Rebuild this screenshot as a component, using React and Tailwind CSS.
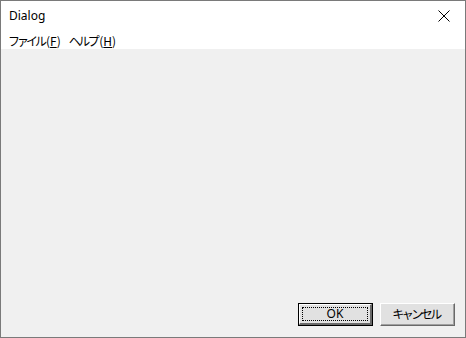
export default function App() {
  const jp = { fontFamily: '"Noto Sans CJK JP", "Noto Sans", sans-serif' };
  return (
    <div className="w-[466px] h-[338px] flex flex-col border border-[#7a7a7a] bg-[#f0f0f0] overflow-hidden" style={{ fontFamily: '"Noto Sans", "Noto Sans CJK JP", sans-serif' }}>
      <div className="h-[29px] bg-white flex items-center justify-between shrink-0">
        <span className="pl-[8px] text-[12px] text-black leading-none">Dialog</span>
        <div className="w-[46px] h-[29px] flex items-center justify-center pl-[4px]">
          <svg width="12" height="12" viewBox="0 0 12 12">
            <path d="M0.5 0.5 L11.5 11.5 M11.5 0.5 L0.5 11.5" stroke="#000" strokeWidth="1" fill="none" />
          </svg>
        </div>
      </div>
      <div className="h-[19px] bg-white flex items-center text-[12px] text-black shrink-0 leading-none pt-[2px]" style={jp}>
        <span className="pl-[7px]"><span className="tracking-[-3px]">ファイル</span><span className="pl-[2px]">(<span className="underline">F</span>)</span></span>
        <span className="pl-[8px]"><span className="tracking-[-2.5px]">ヘルプ</span><span className="pl-[2px]">(<span className="underline">H</span>)</span></span>
      </div>
      <div className="flex-1 flex items-end justify-end gap-[7px] pr-[10px] pb-[11px]">
        <button className="w-[75px] h-[23px] border border-[#000] bg-[#e1e1e1] p-0 flex">
          <div className="flex-1 border-t border-l border-t-white border-l-white border-r-2 border-b-2 border-r-[#696969] border-b-[#696969] flex p-[2px]">
            <div className="flex-1 border border-dotted border-black flex items-center justify-center text-[12px] text-black leading-none">
              OK
            </div>
          </div>
        </button>
        <button className="w-[75px] h-[23px] bg-[#e1e1e1] p-0 flex border-t border-l border-t-white border-l-white border-r border-b border-r-[#696969] border-b-[#696969]">
          <div className="flex-1 border-r border-b border-r-[#a0a0a0] border-b-[#a0a0a0] flex items-center justify-center text-[12px] text-black leading-none" style={jp}>
            <span className="tracking-[-2.5px] pr-[2px]">キャンセル</span>
          </div>
        </button>
      </div>
    </div>
  );
}
